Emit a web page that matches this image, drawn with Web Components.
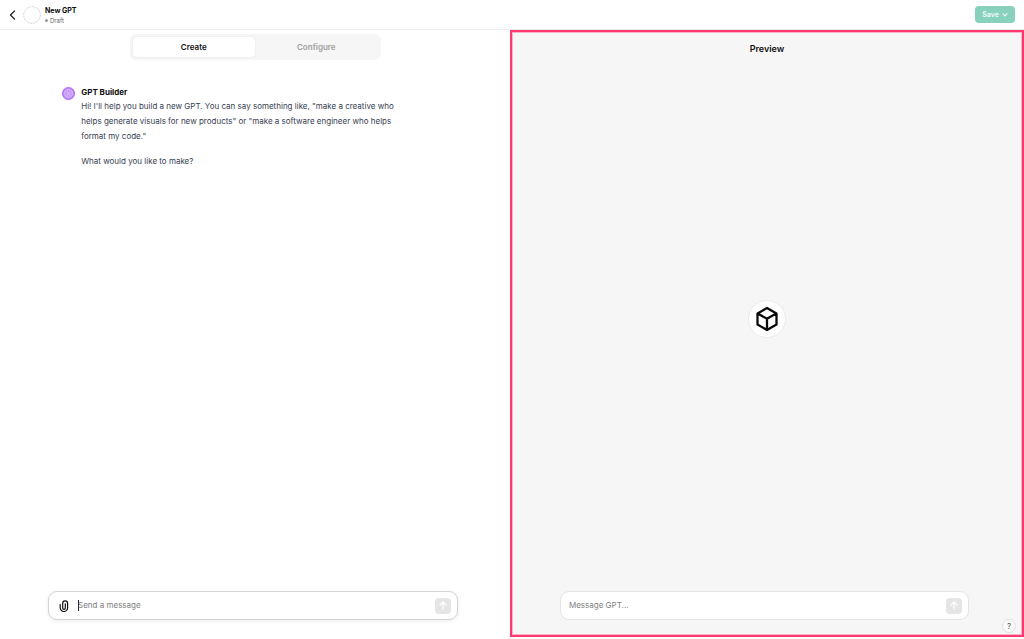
<!DOCTYPE html>
<html lang="en">
<head>
<meta charset="utf-8">
<title>New GPT</title>
<style>
html, body { height: 100%; margin: 0; }
body { background: #fff; color: #0d0d0d; font: 8px/15px Inter, "Liberation Sans", Arial, sans-serif; }
</style>
</head>
<body>
<gpt-editor></gpt-editor>
<script>
const define = (name, html, init) => customElements.define(name, class extends HTMLElement {
  constructor() {
    super();
    this.attachShadow({ mode: "open" }).innerHTML =
      "<style>*{box-sizing:border-box}button,input{font:inherit;border:0;margin:0;padding:0}</style>" + html;
  }
  connectedCallback() { if (init) init(this, this.shadowRoot); }
});

define("editor-header", `
<style>
:host { display: flex; align-items: center; height: 30px; padding: 0 9px; border-bottom: 1px solid #ececec; background: #fff; flex: none; box-sizing: border-box; }
a { display: flex; color: #222; }
.avatar { display: block; margin: 0 4px 0 7px; }
.name { flex: 1; padding-top: 2px; }
h1 { margin: 0; font-size: 7px; line-height: 10px; font-weight: 700; }
p { display: flex; align-items: center; gap: 2px; margin: 0; font-size: 6px; line-height: 9px; color: #666; }
p::before { content: ""; width: 3px; height: 3px; border-radius: 50%; background: #999; }
button { display: flex; align-items: center; justify-content: center; gap: 3px; width: 40px; height: 17px; border-radius: 4px; background: #87d1bd; color: #f3fbf9; font-size: 7px; line-height: 16px; font-weight: 600; }
</style>
<a href="#" aria-label="Back"><svg width="7" height="10" viewBox="0 0 7 10" fill="none" stroke="currentColor" stroke-width="1.3" stroke-linecap="round" stroke-linejoin="round"><path d="M5.5 1 1.5 5l4 4"/></svg></a>
<svg class="avatar" width="18" height="18" viewBox="0 0 18 18"><circle cx="9" cy="9" r="8.3" fill="none" stroke="#cfcfcf" stroke-dasharray="1.7 .9"/></svg>
<div class="name"><h1>New GPT</h1><p>Draft</p></div>
<button type="button">Save<svg width="6" height="4" viewBox="0 0 6 4" fill="none" stroke="currentColor" stroke-width="1.1" stroke-linecap="round" stroke-linejoin="round"><path d="M1 .8 3 2.9 5 .8"/></svg></button>`);

define("mode-tabs", `
<style>
:host { display: flex; width: 251px; height: 26px; padding: 3px; box-sizing: border-box; border-radius: 6px; background: #f6f6f6; align-self: center; }
div { display: flex; flex: 1; }
button { flex: 1; border-radius: 4px; background: none; color: #a0a0a0; font-weight: 600; }
button[aria-selected=true] { background: #fff; color: #111; box-shadow: 0 0 2px #0000001a; }
</style>
<div role="tablist"><button role="tab" aria-selected="true">Create</button><button role="tab" aria-selected="false">Configure</button></div>`);

define("chat-message", `
<style>
:host { display: flex; gap: 6px; }
svg { flex: none; margin-top: 2px; }
h2 { margin: 0; font-size: 8px; line-height: 14px; font-weight: 700; color: #0d0d0d; }
div { color: #374151; }
</style>
<svg width="13" height="13" viewBox="0 0 13 13"><circle cx="6.5" cy="6.5" r="6.1" fill="#bd87fb" stroke="#a35cf8" stroke-width=".8"/><g fill="none" stroke="#d9b8ff" stroke-width=".6"><ellipse cx="6.5" cy="4.8" rx="3.6" ry="2.2"/><ellipse cx="6.5" cy="4.8" rx="3.6" ry="2.2" transform="rotate(60 6.5 6.5)"/><ellipse cx="6.5" cy="4.8" rx="3.6" ry="2.2" transform="rotate(120 6.5 6.5)"/><ellipse cx="6.5" cy="4.8" rx="3.6" ry="2.2" transform="rotate(180 6.5 6.5)"/><ellipse cx="6.5" cy="4.8" rx="3.6" ry="2.2" transform="rotate(240 6.5 6.5)"/><ellipse cx="6.5" cy="4.8" rx="3.6" ry="2.2" transform="rotate(300 6.5 6.5)"/></g></svg>
<div><h2>GPT Builder</h2><slot></slot></div>`);

define("message-box", `
<style>
:host { display: block; width: 81%; }
form { display: flex; align-items: center; height: 29px; margin: 0; padding: 0 6px 0 8px; border: 1px solid #e4e4e4; border-radius: 9px; background: #fff; }
:host([attach]) form { border-color: #d4d4d4; box-shadow: 0 1px 4px #00000014; }
.clip, .caret { display: none; }
:host([attach]) .clip { display: flex; background: none; color: #111; margin: 0 9px 0 2px; }
:host([attach]) .caret { display: block; width: 1px; height: 11px; background: #222; margin-right: -1px; }
input { flex: 1; min-width: 0; background: none; outline: 0; color: #222; }
input::placeholder { color: #808080; opacity: 1; }
.send { display: flex; align-items: center; justify-content: center; width: 16px; height: 16px; border-radius: 4px; background: #e5e5e5; color: #fff; }
</style>
<form>
<button class="clip" type="button" aria-label="Attach file"><svg width="10" height="12" viewBox="0 0 10 12" fill="none" stroke="currentColor" stroke-width="1.2" stroke-linecap="round"><path d="M6.300 3.800v4.200a1.300 1.300 0 0 1-2.600 0V3.400a2.400 2.400 0 0 1 4.900 0v4.400a3.700 3.700 0 0 1-7.400 0V4.400"/></svg></button>
<span class="caret"></span><input type="text">
<button class="send" type="button" aria-label="Send"><svg width="8" height="9" viewBox="0 0 8 9" fill="none" stroke="currentColor" stroke-width="1.2" stroke-linecap="round" stroke-linejoin="round"><path d="M4 8V1M1 4l3-3 3 3"/></svg></button>
</form>`, (host, root) => {
  const input = root.querySelector("input");
  input.placeholder = host.getAttribute("placeholder");
  input.setAttribute("aria-label", input.placeholder);
});

define("preview-pane", `
<style>
:host { position: relative; display: flex; flex-direction: column; box-sizing: border-box; border: 2px solid #ff3871; box-shadow: inset 0 0 0 1px #ff387159; background: #f6f6f6; padding: 9px 0 15px; }
h2 { margin: 0; font-size: 9px; line-height: 16px; font-weight: 600; color: #111; text-align: center; }
.mark { flex: 1; display: flex; align-items: center; justify-content: center; padding-bottom: 10px; }
.mark span { display: flex; align-items: center; justify-content: center; width: 38px; height: 38px; border: 1px solid #ebebeb; border-radius: 50%; background: #fff; }
.entry { display: flex; justify-content: center; padding-right: 5px; }
.help { position: absolute; right: 6px; bottom: 2px; width: 14px; height: 14px; border: 1px solid #e2e2e2; border-radius: 50%; background: #fafafa; color: #555; line-height: 12px; }
</style>
<h2>Preview</h2>
<div class="mark"><span><svg width="24" height="26" viewBox="0 0 24 26" fill="none" stroke="#0a0a0a" stroke-width="2.3" stroke-linejoin="round" stroke-linecap="round"><path d="M12 2 21.500 7.400v11.200L12 24l-9.500-5.400V7.400zM2.800 7.600 12 12.800l9.200-5.200M12 13v10.700"/></svg></span></div>
<div class="entry"><message-box placeholder="Message GPT..."></message-box></div>
<button class="help" type="button" aria-label="Help">?</button>`);

define("gpt-editor", `
<style>
:host { display: flex; flex-direction: column; height: 100%; }
main { flex: 1; display: grid; grid-template-columns: 1fr 1fr; min-height: 0; }
section { display: flex; flex-direction: column; padding: 4px 2px 19px 0; }
chat-message { margin: 25px 20% 0 12%; padding-left: 1px; }
.grow { flex: 1; }
.entry { display: flex; justify-content: center; padding-right: 4px; }
p { margin: 0 0 10px; }
preview-pane { margin: 0 0 2px -2px; }
</style>
<editor-header></editor-header>
<main>
<section>
<mode-tabs></mode-tabs>
<chat-message><p>Hi! I'll help you build a new GPT. You can say something like, "make a creative who helps generate visuals for new products" or "make a software engineer who helps format my code."</p><p>What would you like to make?</p></chat-message>
<div class="grow"></div>
<div class="entry"><message-box attach placeholder="Send a message"></message-box></div>
</section>
<preview-pane></preview-pane>
</main>`);
</script>
</body>
</html>
